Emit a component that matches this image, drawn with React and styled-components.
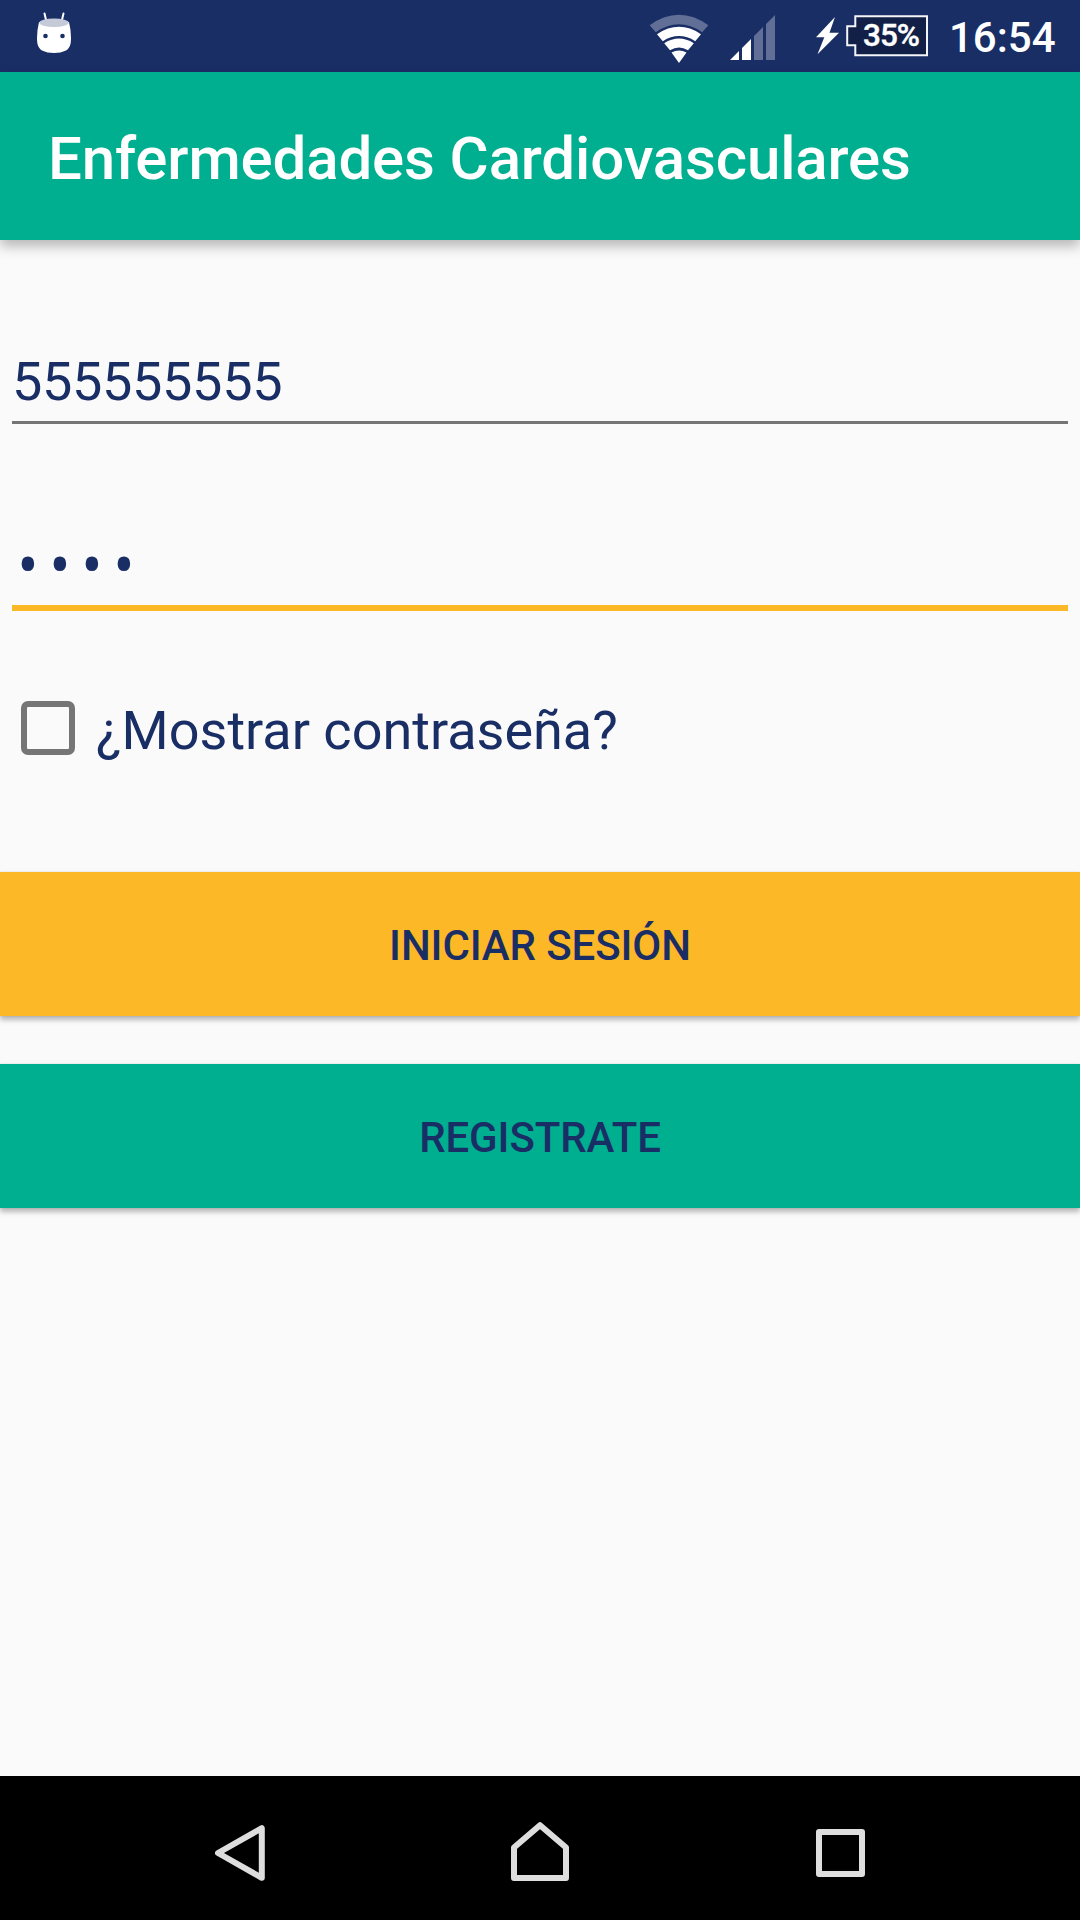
import React, { useState } from "react";
import styled, { createGlobalStyle } from "styled-components";

const NAVY = "#1a2e66";
const GREEN = "#00ae90";
const AMBER = "#fdb827";

const GlobalStyle = createGlobalStyle`
  * { box-sizing: border-box; }
  body {
    margin: 0;
    background: #fafafa;
    font-family: Roboto, "Noto Sans", sans-serif;
    color: ${NAVY};
  }
`;

const Screen = styled.div`
  display: flex;
  flex-direction: column;
  width: 1080px;
  height: 1920px;
  overflow: hidden;
  background: #fafafa;
`;

const StatusBar = styled.header`
  display: flex;
  align-items: flex-start;
  justify-content: space-between;
  flex: none;
  height: 72px;
  padding: 0 24px 0 36px;
  background: ${NAVY};
`;

const StatusGroup = styled.div`
  display: flex;
  align-items: flex-start;
`;

const StatusIcon = styled.svg`
  display: block;
  flex: none;
  width: ${(p) => p.$w}px;
  height: 72px;
  margin-right: ${(p) => p.$gap || 0}px;
`;

const Battery = styled.div`
  display: grid;
  width: 83px;
  height: 72px;
  margin-right: 20px;

  > * {
    grid-area: 1 / 1;
  }
`;

const BatteryLevel = styled.span`
  padding-left: 17px;
  color: #fff;
  font-size: 31.5px;
  font-weight: 500;
  line-height: 72px;
  letter-spacing: -1px;
  -webkit-text-stroke: 0.4px #fff;
  white-space: nowrap;
  z-index: 1;
`;

const Clock = styled.time`
  width: 107px;
  color: #fff;
  font-size: 42px;
  font-weight: 500;
  line-height: 75px;
  white-space: nowrap;
`;

const AppBar = styled.div`
  display: flex;
  align-items: center;
  flex: none;
  height: 168px;
  padding: 5px 48px 0;
  background: ${GREEN};
  box-shadow: 0 6px 12px rgba(0, 0, 0, 0.28);
`;

const Title = styled.h1`
  margin: 0;
  color: #fff;
  font-size: 60px;
  font-weight: 500;
  line-height: 70px;
  letter-spacing: -0.14px;
  white-space: nowrap;
`;

const Form = styled.main`
  display: flex;
  flex-direction: column;
  flex: 1;
`;

const Field = styled.div`
  height: ${(p) => p.$height}px;
  margin: 0 12px;
  padding-top: ${(p) => p.$top}px;
  border-bottom: ${(p) => (p.$focused ? `6px solid ${AMBER}` : "3px solid #757575")};
`;

const FieldText = styled.div`
  font-size: 54px;
  line-height: 64px;
  letter-spacing: -0.33px;
  white-space: nowrap;
`;

const SecretText = styled(FieldText)`
  padding-left: 5.5px;
  font-size: 62px;
  letter-spacing: 11.1px;
  transform: scaleY(1.12);
`;

const CheckRow = styled.label`
  display: flex;
  align-items: center;
  height: 54px;
  margin: 90px 0 117px 21px;
`;

const CheckBox = styled.span`
  width: 54px;
  height: 54px;
  border: 6px solid #757575;
  border-radius: 7px;
`;

const CheckLabel = styled.span`
  padding: 5px 0 0 21px;
  font-size: 54px;
  line-height: 64px;
  white-space: nowrap;
`;

const Button = styled.button`
  flex: none;
  height: 144px;
  margin: 0 0 48px;
  padding: 3px 0 0;
  border: 0;
  background: ${(p) => p.$fill};
  box-shadow: 0 4px 5px rgba(0, 0, 0, 0.26), 0 0 2px rgba(0, 0, 0, 0.12);
  color: ${NAVY};
  font: 500 42px/50px Roboto, "Noto Sans", sans-serif;
  letter-spacing: -0.1px;
  text-transform: uppercase;
`;

const NavBar = styled.nav`
  display: flex;
  flex: none;
  justify-content: space-between;
  height: 144px;
  padding: 0 180px;
  background: #000;
`;

const NavIcon = styled.svg`
  width: 120px;
  height: 144px;
  fill: none;
  stroke: #dedede;
  stroke-width: 6;
  stroke-linejoin: round;
`;

export default function App() {
  const [shown, setShown] = useState(false);
  return (
    <Screen>
      <GlobalStyle />
      <StatusBar>
        <StatusIcon $w={36} viewBox="36 0 36 72">
          <path d="M44.5 13.5 46.5 22M63.5 13.5 61.5 22" stroke="#fff" strokeWidth="2" strokeLinecap="round" />
          <path d="M39 22Q37 30 37 38C37 44 38 48 42 50.5Q47 53 54 53T66 50.5C70 48 71 44 71 38Q71 30 69 22Z" fill="#fff" />
          <ellipse cx="54" cy="22.8" rx="14.8" ry="4.2" fill="#c5cad8" />
          <circle cx="45.5" cy="36" r="2.3" fill={NAVY} />
          <circle cx="62.5" cy="36" r="2.3" fill={NAVY} />
        </StatusIcon>
        <StatusGroup>
          <StatusIcon $w={60} $gap={21} viewBox="649 0 60 72">
            <path d="M649.7 25.2Q679 4.5 708.3 25.2L702.2 32.2Q679 16.5 655.8 32.2Z" fill="#616f96" />
            <path d="M657 34.2Q679 19.5 701 34.2L695.2 41.2Q679 31 662.8 41.2Z" fill="#fff" />
            <path d="M664.2 43.2Q679 34 693.8 43.2L688 50.2Q679 44.8 670 50.2Z" fill="#fff" />
            <path d="M671.5 52.5Q679 48.5 686.5 52.5L679 63Z" fill="#fff" />
          </StatusIcon>
          <StatusIcon $w={45} $gap={40} viewBox="730 0 45 72">
            <path d="M730 60 739 51V60ZM742 60V48L751 39V60Z" fill="#fff" />
            <path d="M754 60V36L763 27V60ZM766 60V24L775 15V60Z" fill="#616f96" />
          </StatusIcon>
          <StatusIcon $w={24} $gap={7} viewBox="815 0 24 72">
            <path d="M835 17 816 37.2H824.3L817.5 54.3 839 32.8H829.5Z" fill="#fff" />
          </StatusIcon>
          <Battery>
            <StatusIcon $w={83} viewBox="846 0 83 72">
              <path d="M855.3 16.2H927V55.2H855.3V45.2H847.2V26.2H855.3Z" fill="#121f46" stroke="#f4f5f8" strokeWidth="2" />
            </StatusIcon>
            <BatteryLevel>35%</BatteryLevel>
          </Battery>
          <Clock>16:54</Clock>
        </StatusGroup>
      </StatusBar>
      <AppBar>
        <Title>Enfermedades Cardiovasculares</Title>
      </AppBar>
      <Form>
        <Field $height={184} $top={110}>
          <FieldText>555555555</FieldText>
        </Field>
        <Field $height={187} $top={109} $focused>
          <SecretText>••••</SecretText>
        </Field>
        <CheckRow onClick={() => setShown(!shown)}>
          <CheckBox />
          <CheckLabel>¿Mostrar contraseña?</CheckLabel>
        </CheckRow>
        <Button $fill={AMBER}>Iniciar sesión</Button>
        <Button $fill={GREEN}>Registrate</Button>
      </Form>
      <NavBar>
        <NavIcon viewBox="180 1776 120 144">
          <path d="M261.8 1828.2V1877.8L218 1853Z" />
        </NavIcon>
        <NavIcon viewBox="480 1776 120 144">
          <path d="M514 1878V1847.5L540 1825.2 566 1847.5V1878Z" />
        </NavIcon>
        <NavIcon viewBox="780 1776 120 144">
          <path d="M819 1832H862V1874H819Z" />
        </NavIcon>
      </NavBar>
    </Screen>
  );
}
